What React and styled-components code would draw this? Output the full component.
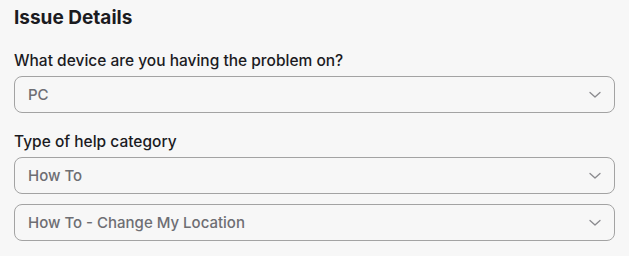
import React from "react";
import styled, { createGlobalStyle } from "styled-components";

const Global = createGlobalStyle`
  html, body { margin: 0; padding: 0; background: #f7f7f7; }
  body { font-family: Inter, "Noto Sans", sans-serif; color: #1b1b1f; }
`;

const Panel = styled.div`
  padding: 6px 14px 0 14px;
  width: 601px;
  display: flex;
  flex-direction: column;
`;

const Heading = styled.h2`
  margin: 0;
  font-size: 19px;
  line-height: 24px;
  font-weight: 700;
  color: #1b1b1f;
`;

const Field = styled.div`
  display: flex;
  flex-direction: column;
  gap: 10px;
  margin-top: ${(p) => p.$top}px;
`;

const Label = styled.label`
  font-size: 15.5px;
  line-height: 20px;
  font-weight: 500;
  color: #1b1b1f;
  margin-bottom: -5px;
`;

const Select = styled.div`
  box-sizing: border-box;
  height: 37px;
  border: 1px solid #a3a3a3;
  border-radius: 8px;
  display: flex;
  align-items: center;
  justify-content: space-between;
  padding: 0 13px 0 13px;
  background: #f7f7f7;
`;

const Value = styled.span`
  font-size: 15px;
  font-weight: 500;
  color: #6e6e73;
`;

const Chevron = () => (
  <svg width="12" height="8" viewBox="0 0 12 8" fill="none">
    <path d="M1 1.5 L6 6 L11 1.5" stroke="#8a8a8e" strokeWidth="1.3" strokeLinecap="round" strokeLinejoin="round" />
  </svg>
);

export default function App() {
  return (
    <>
      <Global />
      <Panel>
        <Heading>Issue Details</Heading>
        <Field $top={21}>
          <Label>What device are you having the problem on?</Label>
          <Select>
            <Value>PC</Value>
            <Chevron />
          </Select>
        </Field>
        <Field $top={19}>
          <Label>Type of help category</Label>
          <Select>
            <Value>How To</Value>
            <Chevron />
          </Select>
          <Select>
            <Value>How To - Change My Location</Value>
            <Chevron />
          </Select>
        </Field>
      </Panel>
    </>
  );
}
